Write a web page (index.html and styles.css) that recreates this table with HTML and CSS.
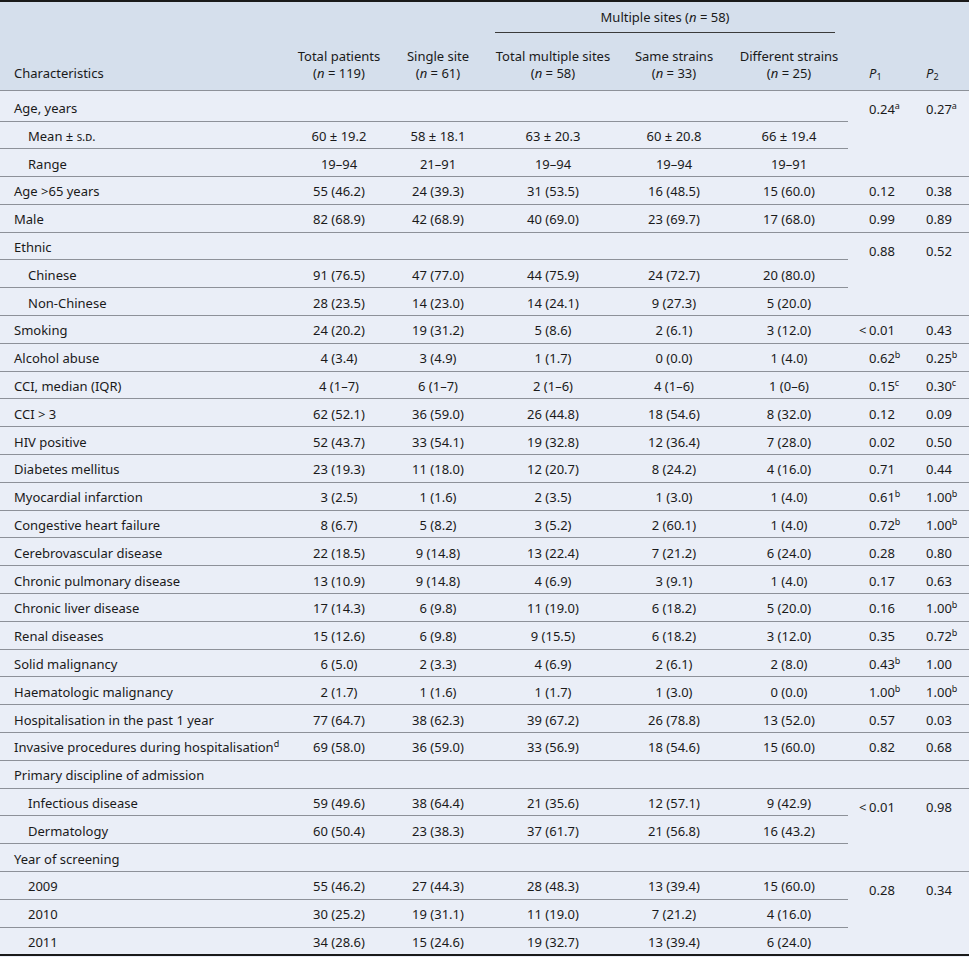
FILE: index.html
```html
<!DOCTYPE html>
<html>
<head>
<meta charset="utf-8">
<link rel="stylesheet" href="styles.css">
</head>
<body>
<table class="tbl">
<colgroup>
<col class="w-label"><col class="w-tot"><col class="w-single"><col class="w-multi"><col class="w-same"><col class="w-diff"><col class="w-p1"><col class="w-p2">
</colgroup>
<thead>
<tr class="h1">
<th rowspan="2" class="lab">Characteristics</th>
<th rowspan="2">Total patients<br>(<i>n</i> = 119)</th>
<th rowspan="2">Single site<br>(<i>n</i> = 61)</th>
<th colspan="3" class="span"><div class="span-in">Multiple sites (<i>n</i> = 58)</div></th>
<th rowspan="2" class="p1"><i>P</i><sub>1</sub></th>
<th rowspan="2" class="p2"><i>P</i><sub>2</sub></th>
</tr>
<tr class="h2">
<th>Total multiple sites<br>(<i>n</i> = 58)</th>
<th>Same strains<br>(<i>n</i> = 33)</th>
<th>Different strains<br>(<i>n</i> = 25)</th>
</tr>
</thead>
<tbody>
<tr class="first"><td class="lab">Age, years</td><td></td><td></td><td></td><td></td><td></td><td rowspan="3" class="p1 top">0.24<sup>a</sup></td><td rowspan="3" class="p2 top">0.27<sup>a</sup></td></tr>
<tr><td class="lab ind">Mean ± <span class="sc">s.d.</span></td><td>60 ± 19.2</td><td>58 ± 18.1</td><td>63 ± 20.3</td><td>60 ± 20.8</td><td>66 ± 19.4</td></tr>
<tr><td class="lab ind">Range</td><td>19–94</td><td>21–91</td><td>19–94</td><td>19–94</td><td>19–91</td></tr>
<tr><td class="lab">Age &gt;65 years</td><td>55 (46.2)</td><td>24 (39.3)</td><td>31 (53.5)</td><td>16 (48.5)</td><td>15 (60.0)</td><td class="p1">0.12</td><td class="p2">0.38</td></tr>
<tr><td class="lab">Male</td><td>82 (68.9)</td><td>42 (68.9)</td><td>40 (69.0)</td><td>23 (69.7)</td><td>17 (68.0)</td><td class="p1">0.99</td><td class="p2">0.89</td></tr>
<tr><td class="lab">Ethnic</td><td></td><td></td><td></td><td></td><td></td><td rowspan="3" class="p1 top">0.88</td><td rowspan="3" class="p2 top">0.52</td></tr>
<tr><td class="lab ind">Chinese</td><td>91 (76.5)</td><td>47 (77.0)</td><td>44 (75.9)</td><td>24 (72.7)</td><td>20 (80.0)</td></tr>
<tr><td class="lab ind">Non-Chinese</td><td>28 (23.5)</td><td>14 (23.0)</td><td>14 (24.1)</td><td>9 (27.3)</td><td>5 (20.0)</td></tr>
<tr><td class="lab">Smoking</td><td>24 (20.2)</td><td>19 (31.2)</td><td>5 (8.6)</td><td>2 (6.1)</td><td>3 (12.0)</td><td class="p1"><span class="lt">&lt;</span>0.01</td><td class="p2">0.43</td></tr>
<tr><td class="lab">Alcohol abuse</td><td>4 (3.4)</td><td>3 (4.9)</td><td>1 (1.7)</td><td>0 (0.0)</td><td>1 (4.0)</td><td class="p1">0.62<sup>b</sup></td><td class="p2">0.25<sup>b</sup></td></tr>
<tr><td class="lab">CCI, median (IQR)</td><td>4 (1–7)</td><td>6 (1–7)</td><td>2 (1–6)</td><td>4 (1–6)</td><td>1 (0–6)</td><td class="p1">0.15<sup>c</sup></td><td class="p2">0.30<sup>c</sup></td></tr>
<tr><td class="lab">CCI &gt; 3</td><td>62 (52.1)</td><td>36 (59.0)</td><td>26 (44.8)</td><td>18 (54.6)</td><td>8 (32.0)</td><td class="p1">0.12</td><td class="p2">0.09</td></tr>
<tr><td class="lab">HIV positive</td><td>52 (43.7)</td><td>33 (54.1)</td><td>19 (32.8)</td><td>12 (36.4)</td><td>7 (28.0)</td><td class="p1">0.02</td><td class="p2">0.50</td></tr>
<tr><td class="lab">Diabetes mellitus</td><td>23 (19.3)</td><td>11 (18.0)</td><td>12 (20.7)</td><td>8 (24.2)</td><td>4 (16.0)</td><td class="p1">0.71</td><td class="p2">0.44</td></tr>
<tr><td class="lab">Myocardial infarction</td><td>3 (2.5)</td><td>1 (1.6)</td><td>2 (3.5)</td><td>1 (3.0)</td><td>1 (4.0)</td><td class="p1">0.61<sup>b</sup></td><td class="p2">1.00<sup>b</sup></td></tr>
<tr><td class="lab">Congestive heart failure</td><td>8 (6.7)</td><td>5 (8.2)</td><td>3 (5.2)</td><td>2 (60.1)</td><td>1 (4.0)</td><td class="p1">0.72<sup>b</sup></td><td class="p2">1.00<sup>b</sup></td></tr>
<tr><td class="lab">Cerebrovascular disease</td><td>22 (18.5)</td><td>9 (14.8)</td><td>13 (22.4)</td><td>7 (21.2)</td><td>6 (24.0)</td><td class="p1">0.28</td><td class="p2">0.80</td></tr>
<tr><td class="lab">Chronic pulmonary disease</td><td>13 (10.9)</td><td>9 (14.8)</td><td>4 (6.9)</td><td>3 (9.1)</td><td>1 (4.0)</td><td class="p1">0.17</td><td class="p2">0.63</td></tr>
<tr><td class="lab">Chronic liver disease</td><td>17 (14.3)</td><td>6 (9.8)</td><td>11 (19.0)</td><td>6 (18.2)</td><td>5 (20.0)</td><td class="p1">0.16</td><td class="p2">1.00<sup>b</sup></td></tr>
<tr><td class="lab">Renal diseases</td><td>15 (12.6)</td><td>6 (9.8)</td><td>9 (15.5)</td><td>6 (18.2)</td><td>3 (12.0)</td><td class="p1">0.35</td><td class="p2">0.72<sup>b</sup></td></tr>
<tr><td class="lab">Solid malignancy</td><td>6 (5.0)</td><td>2 (3.3)</td><td>4 (6.9)</td><td>2 (6.1)</td><td>2 (8.0)</td><td class="p1">0.43<sup>b</sup></td><td class="p2">1.00</td></tr>
<tr><td class="lab">Haematologic malignancy</td><td>2 (1.7)</td><td>1 (1.6)</td><td>1 (1.7)</td><td>1 (3.0)</td><td>0 (0.0)</td><td class="p1">1.00<sup>b</sup></td><td class="p2">1.00<sup>b</sup></td></tr>
<tr><td class="lab">Hospitalisation in the past 1 year</td><td>77 (64.7)</td><td>38 (62.3)</td><td>39 (67.2)</td><td>26 (78.8)</td><td>13 (52.0)</td><td class="p1">0.57</td><td class="p2">0.03</td></tr>
<tr><td class="lab">Invasive procedures during hospitalisation<sup>d</sup></td><td>69 (58.0)</td><td>36 (59.0)</td><td>33 (56.9)</td><td>18 (54.6)</td><td>15 (60.0)</td><td class="p1">0.82</td><td class="p2">0.68</td></tr>
<tr><td class="lab">Primary discipline of admission</td><td></td><td></td><td></td><td></td><td></td><td></td><td></td></tr>
<tr><td class="lab ind">Infectious disease</td><td>59 (49.6)</td><td>38 (64.4)</td><td>21 (35.6)</td><td>12 (57.1)</td><td>9 (42.9)</td><td rowspan="3" class="p1 top"><span class="lt">&lt;</span>0.01</td><td rowspan="3" class="p2 top">0.98</td></tr>
<tr><td class="lab ind">Dermatology</td><td>60 (50.4)</td><td>23 (38.3)</td><td>37 (61.7)</td><td>21 (56.8)</td><td>16 (43.2)</td></tr>
<tr><td class="lab">Year of screening</td><td></td><td></td><td></td><td></td><td></td></tr>
<tr><td class="lab ind">2009</td><td>55 (46.2)</td><td>27 (44.3)</td><td>28 (48.3)</td><td>13 (39.4)</td><td>15 (60.0)</td><td rowspan="3" class="p1 top">0.28</td><td rowspan="3" class="p2 top">0.34</td></tr>
<tr><td class="lab ind">2010</td><td>30 (25.2)</td><td>19 (31.1)</td><td>11 (19.0)</td><td>7 (21.2)</td><td>4 (16.0)</td></tr>
<tr><td class="lab ind">2011</td><td>34 (28.6)</td><td>15 (24.6)</td><td>19 (32.7)</td><td>13 (39.4)</td><td>6 (24.0)</td></tr>
</tbody>
</table>
</body>
</html>
```
FILE: styles.css
```css
html, body {
  margin: 0;
  padding: 0;
  background: #eaeef7;
}
.tbl {
  width: 969px;
  table-layout: fixed;
  border-collapse: collapse;
  font-family: "Noto Sans", "Open Sans", sans-serif;
  font-size: 13px;
  color: #1a1a1a;
  background: #eaeef7;
  border-top: 2px solid #1a1a1a;
  border-bottom: 2px solid #1a1a1a;
}
.w-label { width: 290px; }
.w-tot { width: 98px; }
.w-single { width: 100px; }
.w-multi { width: 130px; }
.w-same { width: 112px; }
.w-diff { width: 118px; }
.w-p1 { width: 64px; }
.w-p2 { width: 57px; }

thead {
  background: #d5dfec;
  border-bottom: 1px solid #8d9199;
}
th {
  font-weight: normal;
  text-align: center;
  vertical-align: bottom;
  line-height: 17px;
  padding: 0 0 8px 0;
}
.h1 { height: 31px; }
.h1 th.span {
  vertical-align: top;
  padding: 7px 0 0 0;
}
.span-in {
  margin: 0 13px 0 7px;
  padding-bottom: 6px;
  border-bottom: 1px solid #3a3a3a;
}
.h2 { height: 57px; }

th.lab, td.lab { text-align: left; padding-left: 14px; }
td.ind { padding-left: 28px; }
th.p1, td.p1 { text-align: left; padding-left: 21px; }
th.p2, td.p2 { text-align: left; padding-left: 14px; }

td {
  text-align: center;
  vertical-align: middle;
  padding: 3px 0 0 0;
  line-height: 17px;
  white-space: nowrap;
}
tbody tr { height: 27.8px; }
tbody tr.first { height: 31px; }
tbody tr.first td { padding-top: 5px; }
tbody td { border-bottom: 1px solid #8d9199; }
td.top { vertical-align: top; padding-top: 10px; }
tbody tr.first td.top { padding-top: 10px; }

sub {
  font-size: 9px;
  vertical-align: -2px;
  line-height: 0;
}
sup {
  font-size: 9px;
  vertical-align: 5px;
  line-height: 0;
}
.sc {
  font-variant: small-caps;
  font-size: 12px;
}
.lt {
  display: inline-block;
  width: 10px;
  margin-left: -10px;
  text-align: left;
}
```
